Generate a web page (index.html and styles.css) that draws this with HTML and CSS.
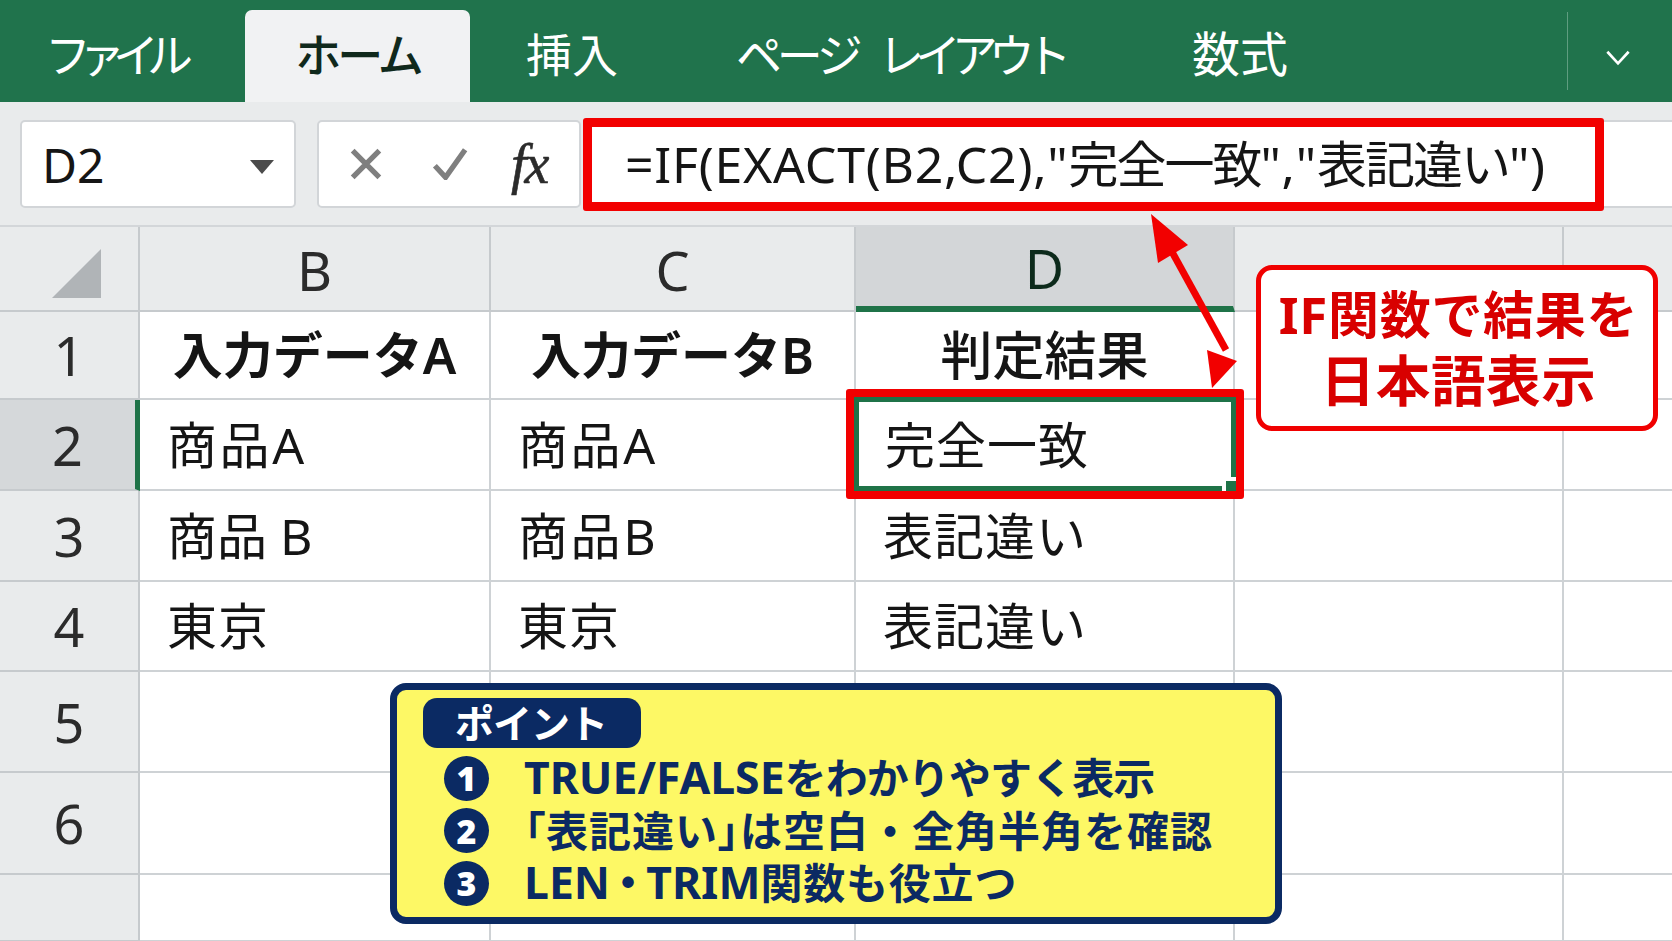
FILE: index.html
```html
<!DOCTYPE html>
<html lang="ja">
<head>
<meta charset="utf-8">
<title>IF EXACT</title>
<link rel="stylesheet" href="styles.css">
</head>
<body>
<div class="app">
  <nav class="ribbon">
    <span class="tab tab-file">ファイル</span>
    <span class="tab tab-home">ホーム</span>
    <span class="tab tab-insert">挿入</span>
    <span class="tab tab-layout">ページ <span class="layout-word">レイアウト</span></span>
    <span class="tab tab-formula">数式</span>
    <span class="ribbon-divider"></span>
    <svg class="chevron" viewBox="0 0 28 18"><path d="M2 2 L14 15 L26 2" /></svg>
  </nav>
  <div class="formula-row">
    <div class="name-box"><span>D2</span><i class="drop"></i></div>
    <div class="fx-box">
      <svg class="fx-icon" viewBox="0 0 36 36"><path d="M3 3 L33 33 M33 3 L3 33"/></svg>
      <svg class="fx-icon check" viewBox="0 0 40 36"><path d="M3 20 L15 33 L37 2"/></svg>
      <span class="fx-text">fx</span>
    </div>
    <div class="formula-input">=IF(EXACT(B2,C2),"<span class="jp">完全一致</span>","<span class="jp">表記違い</span>")</div>
    <div class="formula-rest"></div>
  </div>
  <main class="sheet">
    <div class="corner"><svg viewBox="0 0 49 49"><path d="M49 0 V49 H0 Z"/></svg></div>
    <div class="col-h">B</div><div class="col-h">C</div><div class="col-h col-active">D</div><div class="col-h"></div><div class="col-h col-last"></div>

    <div class="row-h">1</div>
    <div class="cell bold center">入力データA</div><div class="cell bold center">入力データB</div><div class="cell medium center">判定結果</div><div class="cell"></div><div class="cell col-last"></div>

    <div class="row-h row-active">2</div>
    <div class="cell cell-wide">商品A</div><div class="cell cell-wide">商品A</div>
    <div class="cell cell-selected">完全一致
      <span class="select-box"><span class="handle"></span></span>
    </div>
    <div class="cell"></div><div class="cell col-last"></div>

    <div class="row-h">3</div>
    <div class="cell cell-tight">商品 B</div><div class="cell cell-wide">商品B</div><div class="cell">表記違い</div><div class="cell"></div><div class="cell col-last"></div>

    <div class="row-h">4</div>
    <div class="cell">東京</div><div class="cell">東京</div><div class="cell">表記違い</div><div class="cell"></div><div class="cell col-last"></div>

    <div class="row-h">5</div><div class="cell"></div><div class="cell"></div><div class="cell"></div><div class="cell"></div><div class="cell col-last"></div>
    <div class="row-h">6</div><div class="cell"></div><div class="cell"></div><div class="cell"></div><div class="cell"></div><div class="cell col-last"></div>
    <div class="row-h"></div><div class="cell"></div><div class="cell"></div><div class="cell"></div><div class="cell"></div><div class="cell col-last"></div>
  </main>

  <svg class="arrow" viewBox="0 0 1672 941">
    <path class="arrow-line" d="M1171 250 L1226 350"/>
    <path class="arrow-head" d="M1151 214 L1188 245 L1158 263 Z"/>
    <path class="arrow-head" d="M1212 388 L1207 350 L1237 361 Z"/>
  </svg>
  <div class="callout">IF関数で結果を<br><span class="callout-2">日本語表示</span></div>

  <section class="points">
    <div class="points-label">ポイント</div>
    <ol class="points-list">
      <li class="line-1"><b class="num">1</b><span class="line-text"><span class="lat">TRUE/FALSE</span>をわかりやすく表示</span></li>
      <li class="line-2"><b class="num">2</b><span class="line-text"><span class="pn">「</span>表記違い<span class="pn">」</span>は空白・全角半角を確認</span></li>
      <li class="line-3"><b class="num">3</b><span class="line-text"><span class="lat">LEN<span class="pn dot">・</span>TRIM</span>関数も役立つ</span></li>
    </ol>
  </section>
</div>
</body>
</html>
```
FILE: styles.css
```css
* { box-sizing: border-box; }
html, body { margin: 0; padding: 0; }
body { width: 1672px; height: 941px; overflow: hidden; background: #fff; font-family: "Noto Sans", "Noto Sans CJK JP", sans-serif; color: #151515; }
.app { position: relative; width: 1672px; height: 941px; overflow: hidden; display: flex; flex-direction: column; }

.ribbon { height: 102px; background: #20734c; display: flex; align-items: flex-end; color: #fff; flex: none; }
.tab { font-size: 46px; line-height: 88px; height: 92px; white-space: nowrap; font-weight: 400; flex: none; }
.tab-file { margin-left: 45px; width: 200px; letter-spacing: -12px; }
.tab-home { width: 225px; background: #f1f2f3; color: #10291c; text-align: center; border-radius: 7px 7px 0 0; font-weight: 500; letter-spacing: -4px; }
.tab-insert { margin-left: 56px; width: 210px; }
.tab-layout { width: 456px; letter-spacing: -5.2px; }
.layout-word { letter-spacing: -9.2px; margin-left: 14px; }
.tab-formula { width: 375px; font-size: 48px; }
.ribbon-divider { width: 1px; height: 78px; background: #5f9d80; margin-bottom: 12px; flex: none; }
.chevron { width: 26px; height: 16px; margin: 0 0 36px 37px; fill: none; stroke: #fff; stroke-width: 3; flex: none; }

.formula-row { height: 124px; background: #e9ebec; display: flex; align-items: center; flex: none; padding-left: 20px; }
.name-box, .fx-box, .formula-rest { background: #fff; border: 2px solid #d2d5d8; border-radius: 5px; height: 88px; }
.name-box { width: 276px; display: flex; align-items: center; justify-content: space-between; padding: 0 20px 0 20px; font-size: 48px; }
.drop { width: 0; height: 0; border-left: 12px solid transparent; border-right: 12px solid transparent; border-top: 14px solid #4b4b4b; margin-top: 6px; }
.fx-box { width: 264px; margin-left: 21px; display: flex; align-items: center; padding-left: 30px; }
.fx-icon { width: 34px; height: 32px; fill: none; stroke: #7f7f7f; stroke-width: 6; }
.check { width: 40px; margin-left: 47px; }
.fx-text { font-family: "Liberation Serif", serif; font-style: italic; font-size: 56px; margin-left: 41px; color: #2b2b2b; letter-spacing: -2px; line-height: 1; -webkit-text-stroke: .6px #2b2b2b; }
.formula-input { width: 1021px; height: 93px; margin-left: 2px; background: #fff; border: 9px solid #f20000; border-radius: 3px; font-size: 50px; line-height: 74px; padding-left: 33px; white-space: nowrap; letter-spacing: .75px; position: relative; z-index: 2; flex: none; }
.jp { letter-spacing: -2px; }
.formula-rest { flex: 1; border-right: 0; border-radius: 0; margin-left: -2px; }

.sheet { flex: 1; display: grid; grid-template-columns: 140px 351px 365px 379px 329px 108px; grid-template-rows: 85px 88px 91px 91px 90px 101px 102px 67px; border-top: 2px solid #d3d6d9; margin-top: -1px; position: relative; }
.corner, .col-h, .row-h { background: #e9ebec; border-right: 2px solid #c6cacd; border-bottom: 2px solid #c6cacd; display: flex; align-items: center; justify-content: center; }
.corner { align-items: flex-start; padding: 22px 0 0 14px; }
.corner svg { width: 49px; height: 49px; fill: #b0b4b7; }
.col-h { font-size: 54px; color: #2b2b2b; padding-top: 3px; }
.col-active { background: #d3d6d8; border-bottom: 6px solid #1f7348; color: #0c2a1b; }
.row-h { font-size: 54px; color: #2b2b2b; }
.row-active { background: #d5d8da; border-right: 5px solid #1f7348; }
.cell { background: #fff; border-right: 2px solid #ced2d5; border-bottom: 2px solid #ced2d5; font-size: 50px; line-height: 1; display: flex; align-items: center; padding: 0 0 0 27px; white-space: nowrap; color: #151515; position: relative; letter-spacing: 1px; }
.cell-wide { letter-spacing: 2.6px; }
.cell-tight { letter-spacing: 0; }
.col-last { border-right: 0; }
.bold { font-weight: 600; letter-spacing: 0; }
.medium { font-weight: 500; font-size: 52px; letter-spacing: 0; }
.center { justify-content: center; padding-left: 0; }
.cell-selected { padding-left: 29px; z-index: 2; }

.select-box { position: absolute; left: -10px; right: -11px; top: -11px; bottom: -10px; border: 8px solid #f20000; border-radius: 3px; outline: 5px solid #1f7348; outline-offset: -13px; }
.handle { position: absolute; right: 0; bottom: 0; width: 14px; height: 14px; background: #1f7348; border-left: 4px solid #fff; border-top: 4px solid #fff; }

.arrow { position: absolute; left: 0; top: 0; width: 1672px; height: 941px; pointer-events: none; z-index: 3; }
.arrow-line { stroke: #f20000; stroke-width: 7; fill: none; }
.arrow-head { fill: #f20000; }

.callout { position: absolute; left: 1256px; top: 265px; width: 402px; height: 166px; background: #fff; border: 5px solid #f00000; border-radius: 16px; color: #d80000; font-weight: 700; font-size: 51px; line-height: 66px; text-align: center; padding: 11px 0 0 3px; z-index: 4; white-space: nowrap; letter-spacing: .7px; }
.callout-2 { font-size: 54.5px; }

.points { position: absolute; left: 390px; top: 683px; width: 892px; height: 241px; background: #fdf865; border: 7px solid #0b2a63; border-radius: 16px; z-index: 4; color: #0b2a63; padding: 8px 0 0 26px; }
.points-label { width: 218px; height: 50px; border-radius: 14px; background: #0b2a63; color: #fff; font-weight: 700; font-size: 39px; line-height: 50px; padding-left: 32px; letter-spacing: -1px; }
.points-list { list-style: none; margin: 1px 0 0; padding: 0 0 0 21px; }
.points-list li { display: flex; align-items: center; height: 52.5px; font-size: 42px; font-weight: 700; white-space: nowrap; }
.line-text { display: block; height: 56px; padding-top: 6px; line-height: 50px; }
.line-1 { letter-spacing: -.9px; }
.line-2 { letter-spacing: 1px; }
.line-3 { letter-spacing: .8px; }
.lat { font-size: 44.5px; letter-spacing: 0; line-height: 1; }
.pn { font-feature-settings: "palt"; }
.dot { margin: 0 7px; }
.num { width: 45px; height: 45px; border-radius: 50%; background: #0b2a63; color: #fff; font-size: 34px; display: flex; align-items: center; justify-content: center; margin: 6px 35px 0 0; flex: none; letter-spacing: 0; }
```
